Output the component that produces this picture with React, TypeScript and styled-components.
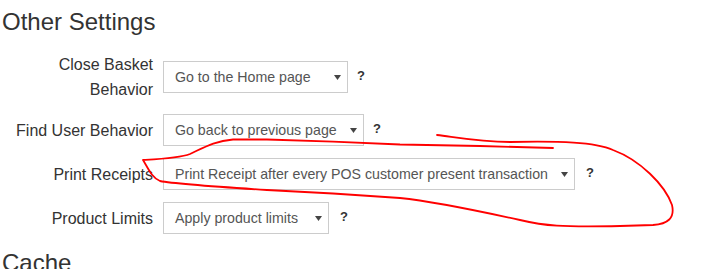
import React from "react";
import styled, { createGlobalStyle } from "styled-components";

const GlobalStyle = createGlobalStyle`
  html, body { margin: 0; padding: 0; background: #fff; }
  body { font-family: "Liberation Sans", Arial, sans-serif; color: #333; }
  * { box-sizing: border-box; }
`;

const Page = styled.div`
  position: relative;
  width: 718px;
  height: 269px;
  overflow: hidden;
  padding-left: 2px;
`;

const Heading = styled.h2<{ $top: number; $bottom: number }>`
  font-family: "Liberation Sans", Arial, sans-serif;
  font-size: 24px;
  font-weight: 400;
  line-height: 26.4px;
  color: #333;
  margin: ${(p) => p.$top}px 0 ${(p) => p.$bottom}px 0;
`;

const Form = styled.div`
  display: flex;
  flex-direction: column;
  gap: 12px;
`;

const Row = styled.div`
  display: flex;
  align-items: center;
`;

const Label = styled.label`
  width: 151px;
  padding-left: 8px;
  padding-right: 0;
  text-align: right;
  font-size: 16px;
  line-height: 25px;
  color: #333;
  flex: none;
`;

const SelectBox = styled.div<{ $width: number }>`
  margin-left: 10px;
  width: ${(p) => p.$width}px;
  height: 32px;
  border: 1px solid #ccc;
  background: #fff;
  display: flex;
  align-items: center;
  padding: 0 6px 0 11px;
  font-size: 14.2px;
  color: #555;
  flex: none;
`;

const SelectText = styled.span`
  white-space: nowrap;
`;

const Arrow = styled.svg`
  margin-left: auto;
  width: 7px;
  height: 5px;
  flex: none;
`;

const Help = styled.span<{ $gap: number }>`
  margin-left: ${(p) => p.$gap}px;
  margin-bottom: 4px;
  font-size: 13px;
  font-weight: 700;
  color: #333;
`;

const Scribble = styled.svg`
  position: absolute;
  left: 0;
  top: 0;
  width: 718px;
  height: 269px;
  pointer-events: none;
`;

type Setting = { label: string; value: string; width: number; gap: number };

const settings: Setting[] = [
  { label: "Close Basket Behavior", value: "Go to the Home page", width: 185, gap: 9 },
  { label: "Find User Behavior", value: "Go back to previous page", width: 201, gap: 9 },
  { label: "Print Receipts", value: "Print Receipt after every POS customer present transaction", width: 412, gap: 11 },
  { label: "Product Limits", value: "Apply product limits", width: 166, gap: 11 },
];

export default function App() {
  return (
    <>
      <GlobalStyle />
      <Page>
        <Heading $top={9} $bottom={17}>Other Settings</Heading>
        <Form>
          {settings.map((s) => (
            <Row key={s.label}>
              <Label>{s.label}</Label>
              <SelectBox $width={s.width}>
                <SelectText>{s.value}</SelectText>
                <Arrow viewBox="0 0 7 5">
                  <path d="M0 0 H7 L3.5 5 Z" fill="#444" />
                </Arrow>
              </SelectBox>
              <Help $gap={s.gap}>?</Help>
            </Row>
          ))}
        </Form>
        <Heading $top={16} $bottom={0}>Cache</Heading>
        <Scribble viewBox="0 0 718 269">
          <path
            d="M553 148 L480 146 L400 144.5 L333 141.7 L267 139.5 L233 139.5 C215 141 205 147 190 154 C180 158 160 159 143 160 C148 168 152 178 160 181 C175 184 220 187 267 190 L333 193.5 L400 198 C430 201 470 209 520 220 C545 226 560 227 620 226 L653 225 C668 224 675 218 672 205 C665 185 640 160 613 150 C595 142 560 141 510 142 C480 142 460 138 437 135"
            fill="none"
            stroke="#f00"
            strokeWidth="1.8"
            strokeLinecap="round"
            strokeLinejoin="round"
          />
        </Scribble>
      </Page>
    </>
  );
}
